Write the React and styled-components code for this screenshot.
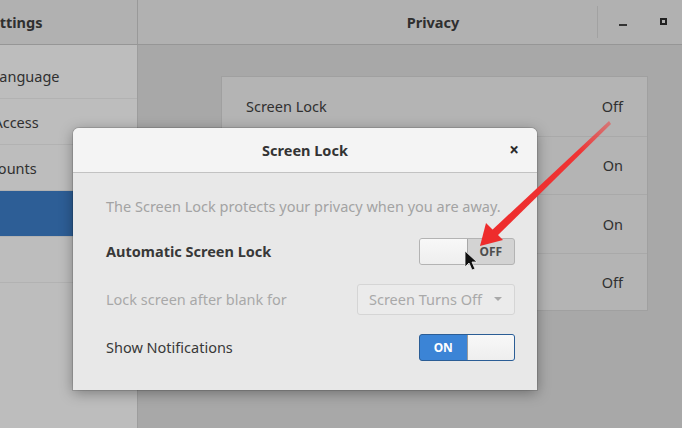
import React from 'react'
import styled, { createGlobalStyle } from 'styled-components'

const GlobalStyle = createGlobalStyle`
  html, body {
    margin: 0;
    padding: 0;
    background: #a8a8a8;
  }
  body {
    font-family: 'Noto Sans', 'Open Sans', sans-serif;
    font-size: 14.5px;
    color: #2e2e2e;
  }
`

const Screen = styled.div`
  position: relative;
  width: 682px;
  height: 428px;
  overflow: hidden;
  background: #a8a8a8;
`

// the settings window is wider than the capture, so it runs off both edges
const Window = styled.div`
  display: flex;
  flex-direction: column;
  width: 815px;
  height: 428px;
  margin-left: -90px;
`

const HeaderBar = styled.div`
  display: flex;
  height: 44px;
  background: #b1b1b1;
  border-bottom: 1px solid #969696;
  flex-shrink: 0;
`

const SideHeader = styled.div`
  width: 228px;
  display: flex;
  align-items: center;
  padding-left: 73px;
  box-sizing: border-box;
  border-right: 1px solid #999;
  font-weight: 700;
  color: #2f2f2f;
`

const MainHeader = styled.div`
  flex: 1;
  display: flex;
  align-items: center;
`

const HeaderTitle = styled.div`
  flex: 1;
  text-align: center;
  font-weight: 700;
  color: #2f2f2f;
  padding-left: 131px;
`

const Controls = styled.div`
  display: flex;
  align-items: center;
  height: 32px;
  border-left: 1px solid #a2a2a2;
  padding-left: 4px;
`

const ControlButton = styled.div`
  width: 41px;
  height: 30px;
  display: flex;
  align-items: center;
  justify-content: center;
`

const MinGlyph = styled.span`
  display: block;
  width: 8px;
  height: 2px;
  margin-top: 6px;
  background: #333;
`

const MaxGlyph = styled.span`
  display: block;
  width: 3px;
  height: 3px;
  border: 2px solid #222;
  margin-top: -2px;
`

const Body = styled.div`
  flex: 1;
  display: flex;
`

const Sidebar = styled.div`
  width: 228px;
  background: #bdbdbd;
  border-right: 1px solid #9d9d9d;
  box-sizing: border-box;
  padding-top: 8px;
`

const SideItem = styled.div`
  height: 46px;
  display: flex;
  align-items: center;
  padding-left: 16px;
  box-sizing: border-box;
  border-bottom: 1px solid #b2b2b2;
  color: #303030;
  background: ${p => (p.$active ? '#2d5e96' : 'transparent')};
`

const Main = styled.div`
  flex: 1;
  display: flex;
  justify-content: center;
  padding: 31px 0 0 6px;
  background: #a8a8a8;
`

const Card = styled.div`
  width: 427px;
  height: 235px;
  background: #b4b4b4;
  border: 1px solid #a0a0a0;
  box-sizing: border-box;
`

const CardRow = styled.div`
  height: 58.5px;
  display: flex;
  align-items: center;
  justify-content: space-between;
  padding: 0 24px;
  box-sizing: border-box;
  border-top: ${p => (p.$first ? 'none' : '1px solid #a9a9a9')};
  color: #303030;
`

const Dialog = styled.div`
  position: absolute;
  left: 73px;
  top: 128px;
  width: 464px;
  height: 262px;
  display: flex;
  flex-direction: column;
  background: #e8e8e8;
  border-radius: 6px 6px 0 0;
  box-shadow: 0 3px 14px rgba(0, 0, 0, 0.35), 0 0 0 1px rgba(0, 0, 0, 0.12);
  overflow: hidden;
`

const DialogTitleBar = styled.div`
  height: 44px;
  display: flex;
  align-items: center;
  background: #f4f4f4;
  border-bottom: 1px solid #c2c2c2;
  flex-shrink: 0;
  padding: 0 18px 0 52px;
`

const DialogTitle = styled.span`
  flex: 1;
  text-align: center;
  font-weight: 700;
  color: #333;
`

const CloseButton = styled.span`
  width: 34px;
  text-align: right;
  font-size: 17px;
  font-weight: 700;
  color: #2a2a2a;
  margin-top: -2px;
`

const DialogBody = styled.div`
  flex: 1;
  display: flex;
  flex-direction: column;
  padding: 23px 22px 0 33px;
`

const Description = styled.div`
  height: 20px;
  line-height: 20px;
  color: #a3a3a3;
  margin-bottom: 11px;
`

const SettingRow = styled.div`
  height: 48px;
  display: flex;
  align-items: center;
  justify-content: space-between;
`

const SettingLabel = styled.span`
  font-weight: ${p => (p.$bold ? 700 : 400)};
  color: ${p => (p.$dim ? '#a8a8a8' : '#383838')};
`

const Switch = styled.div`
  width: 96px;
  height: 27px;
  display: flex;
  box-sizing: border-box;
  border-radius: 3px;
  border: 1px solid ${p => (p.$on ? '#2b5d95' : '#b3b3b3')};
  background: ${p => (p.$on ? '#3b84d6' : '#d3d3d3')};
  overflow: hidden;
`

const SwitchHalf = styled.div`
  flex: 1;
  display: flex;
  align-items: center;
  justify-content: center;
  font-size: 12px;
  font-weight: 700;
  color: ${p => (p.$on ? '#ffffff' : '#4e4e4e')};
`

const Knob = styled.div`
  flex: 1;
  background: linear-gradient(#f8f8f8, #eeeeee);
  border-left: ${p => (p.$right ? '1px solid #9a9a9a' : 'none')};
  border-right: ${p => (p.$right ? 'none' : '1px solid #a8a8a8')};
`

const Combo = styled.div`
  width: 158px;
  height: 31px;
  display: flex;
  align-items: center;
  justify-content: space-between;
  box-sizing: border-box;
  padding: 0 12px 0 11px;
  border: 1px solid #d5d5d5;
  border-radius: 3px;
  background: #ebebeb;
  color: #a9a9a9;
`

const Caret = styled.span`
  width: 0;
  height: 0;
  border-left: 4px solid transparent;
  border-right: 4px solid transparent;
  border-top: 4px solid #a9a9a9;
`

const Overlay = styled.svg`
  position: absolute;
  left: 0;
  top: 0;
  pointer-events: none;
`

const sidebarItems = [
  { label: 'Region & Language' },
  { label: 'Universal Access' },
  { label: 'Online Accounts' },
  { label: 'Privacy', active: true },
  { label: 'Sharing' },
]

const privacyRows = [
  { label: 'Screen Lock', value: 'Off' },
  { label: 'Location Services', value: 'On' },
  { label: 'Usage & History', value: 'On' },
  { label: 'Purge Trash & Temporary Files', value: 'Off' },
]

const ToggleSwitch = ({ on }) =>
  on ? (
    <Switch $on>
      <SwitchHalf $on>ON</SwitchHalf>
      <Knob $right />
    </Switch>
  ) : (
    <Switch>
      <Knob />
      <SwitchHalf>OFF</SwitchHalf>
    </Switch>
  )

const Annotation = () => (
  <Overlay width="682" height="428" viewBox="0 0 682 428">
    <defs>
      <linearGradient id="arrowFade" x1="608" y1="122" x2="490" y2="236" gradientUnits="userSpaceOnUse">
        <stop offset="0" stopColor="#ef4040" stopOpacity="0.55" />
        <stop offset="0.25" stopColor="#ef3434" />
        <stop offset="1" stopColor="#ee2c2c" />
      </linearGradient>
    </defs>
    <polygon points="609,121 611,124 496,237 490,232" fill="url(#arrowFade)" />
    <polygon points="480,246 486,223 503,240" fill="#ee2c2c" />
    {/* mouse pointer */}
    <path
      d="M465 251 L465 267 L469 263 L472 270 L475 269 L472 262 L477 262 Z"
      fill="#111"
      stroke="#f2f2f2"
      strokeWidth="0.8"
    />
  </Overlay>
)

export default function App() {
  return (
    <Screen>
      <GlobalStyle />
      <Window>
        <HeaderBar>
          <SideHeader>Settings</SideHeader>
          <MainHeader>
            <HeaderTitle>Privacy</HeaderTitle>
            <Controls>
              <ControlButton>
                <MinGlyph />
              </ControlButton>
              <ControlButton>
                <MaxGlyph />
              </ControlButton>
              <ControlButton />
            </Controls>
          </MainHeader>
        </HeaderBar>
        <Body>
          <Sidebar>
            {sidebarItems.map(item => (
              <SideItem key={item.label} $active={item.active}>
                {item.label}
              </SideItem>
            ))}
          </Sidebar>
          <Main>
            <Card>
              {privacyRows.map((row, i) => (
                <CardRow key={row.label} $first={i === 0}>
                  <span>{row.label}</span>
                  <span>{row.value}</span>
                </CardRow>
              ))}
            </Card>
          </Main>
        </Body>
      </Window>

      <Dialog>
        <DialogTitleBar>
          <DialogTitle>Screen Lock</DialogTitle>
          <CloseButton>×</CloseButton>
        </DialogTitleBar>
        <DialogBody>
          <Description>The Screen Lock protects your privacy when you are away.</Description>
          <SettingRow>
            <SettingLabel $bold>Automatic Screen Lock</SettingLabel>
            <ToggleSwitch on={false} />
          </SettingRow>
          <SettingRow>
            <SettingLabel $dim>Lock screen after blank for</SettingLabel>
            <Combo>
              <span>Screen Turns Off</span>
              <Caret />
            </Combo>
          </SettingRow>
          <SettingRow>
            <SettingLabel>Show Notifications</SettingLabel>
            <ToggleSwitch on />
          </SettingRow>
        </DialogBody>
      </Dialog>

      <Annotation />
    </Screen>
  )
}
